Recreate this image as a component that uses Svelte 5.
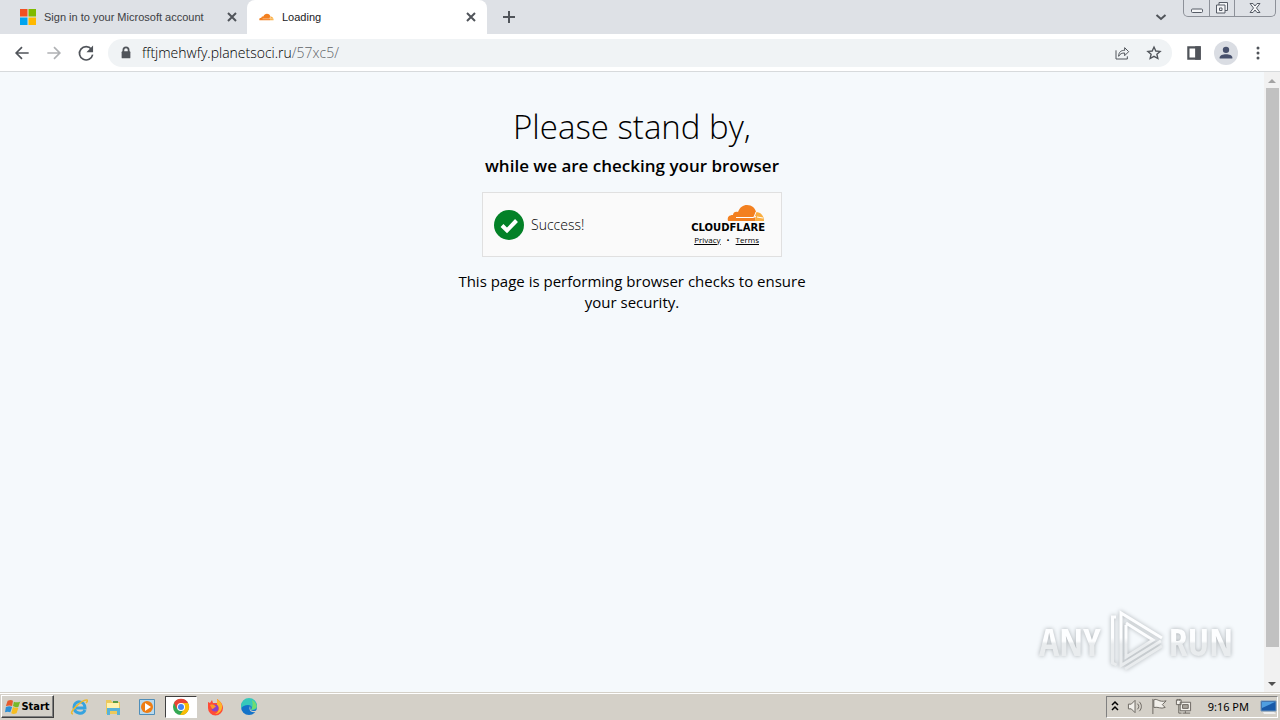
<script>
  const url = { host: 'fftjmehwfy.planetsoci.ru', path: '/57xc5/' };
</script>

{#snippet cloud()}
  <svg class="cloud" viewBox="0 0 38 18" aria-hidden="true">
    <path fill="#f38020" d="M1 17c-1-4 1-6 5-6 0-3 3-4 5-3C13 3 16 1 20 1c5 0 8 3 9 7l-1 9z" />
    <path fill="#faae40" d="M28 17l1-9c5 0 8 4 8 9z" />
    <path fill="none" stroke="#fff" d="M9 13.500h17l3-1M29 8l-2 5M30 13l6 1" />
  </svg>
{/snippet}

<div class="screen">
  <header>
    <div class="tabs">
      <div class="tab">
        <svg class="ms" viewBox="0 0 16 16" aria-hidden="true"><path fill="#f25022" d="M0 0h7.500v7.500H0z" /><path fill="#7fba00" d="M8.500 0H16v7.500H8.500z" /><path fill="#00a4ef" d="M0 8.500h7.500V16H0z" /><path fill="#ffb900" d="M8.500 8.500H16V16H8.500z" /></svg>
        <span>Sign in to your Microsoft account</span>
        <button aria-label="Close tab"><svg viewBox="0 0 16 16"><path d="M4 4l8 8M12 4l-8 8" /></svg></button>
      </div>
      <div class="tab active">
        {@render cloud()}
        <span>Loading</span>
        <button aria-label="Close tab"><svg viewBox="0 0 16 16"><path d="M4 4l8 8M12 4l-8 8" /></svg></button>
      </div>
      <button class="new" aria-label="New tab"><svg viewBox="0 0 16 16"><path d="M8 2v12M2 8h12" /></svg></button>
      <button class="search" aria-label="Search tabs"><svg viewBox="0 0 16 16"><path d="M3.500 6L8 10l4.500-4" /></svg></button>
      <div class="window">
        <button aria-label="Minimize"><svg viewBox="0 0 16 16"><rect x="2.500" y="9" width="11" height="3.500" rx="1" /></svg></button>
        <button aria-label="Restore"><svg viewBox="0 0 16 16"><path d="M5 5V2.500h8.500v8H11M2.500 5h8.500v8H2.500zM5.500 8h2.500v2.500H5.500z" /></svg></button>
        <button aria-label="Close" class="wide"><svg viewBox="0 0 16 16"><path d="M3 3.500h3l2 2.500 2-2.500h3l-3.500 4.500 3.500 4.500h-3L8 10l-2 2.500H3L6.500 8z" /></svg></button>
      </div>
    </div>
    <div class="toolbar">
      <button aria-label="Back"><svg viewBox="0 0 24 24"><path d="M20 12H5M12 5l-7 7 7 7" /></svg></button>
      <button aria-label="Forward" class="off" disabled><svg viewBox="0 0 24 24"><path d="M4 12h15M12 5l7 7-7 7" /></svg></button>
      <button aria-label="Reload"><svg viewBox="0 0 24 24"><path d="M18.500 7.500A8 8 0 1 0 20 14" /><path class="solid" d="M20.500 3v8h-8z" /></svg></button>
      <div class="address">
        <svg class="lock" viewBox="0 0 16 16" aria-hidden="true"><path d="M5 7V4.500a3 3 0 0 1 6 0V7" /><rect x="3" y="6" width="10" height="8" rx="1" /></svg>
        <a href="#top">{url.host}<i>{url.path}</i></a>
        <button aria-label="Share"><svg class="thin" viewBox="0 0 24 24"><path d="M3 8v13h17v-4M7 17c0-7 4-9 9-9V4l6 6-6 6v-4c-4 0-7 1-9 5z" /></svg></button>
        <button aria-label="Bookmark"><svg viewBox="0 0 24 24"><path d="M12 3l2.700 6 6.500.6-4.900 4.300 1.500 6.400L12 17l-5.800 3.300 1.500-6.400L2.800 9.600 9.300 9z" /></svg></button>
      </div>
      <button aria-label="Side panel"><svg class="panel" viewBox="0 0 16 16"><path d="M3 3h10v10H3z" /><path class="solid" d="M9 2h5v12H9z" /></svg></button>
      <button aria-label="Profile" class="profile"><svg viewBox="0 0 22 22"><circle cx="11" cy="7.500" r="3.500" /><path d="M4 17v-1c0-5 14-5 14 0v1z" /></svg></button>
      <button aria-label="Menu"><svg viewBox="0 0 16 16"><g class="solid"><circle cx="8" cy="3" r="1.500" /><circle cx="8" cy="8" r="1.500" /><circle cx="8" cy="13" r="1.500" /></g></svg></button>
    </div>
  </header>

  <div class="view">
    <main id="top">
      <h1>Please stand by,</h1>
      <h2>while we are checking your browser</h2>
      <section class="check">
        <svg class="tick" viewBox="0 0 30 30" aria-hidden="true"><circle cx="15" cy="15" r="15" fill="#038127" /><path fill="none" stroke="#fff" stroke-width="4" d="M8 15.500l5 5L22.500 10.500" /></svg>
        <span>Success!</span>
        <div class="brand">
          {@render cloud()}
          <b>CLOUDFLARE</b>
          <div class="links"><a href="#privacy">Privacy</a><span>•</span><a href="#terms">Terms</a></div>
        </div>
      </section>
      <p>This page is performing browser checks to ensure your security.</p>
    </main>
    <div class="scroll">
      <svg viewBox="0 0 16 16"><path fill="#a3a3a3" d="M4 11l4-4 4 4z" /></svg>
      <div class="track"><div class="thumb"></div></div>
      <svg viewBox="0 0 16 16"><path fill="#505050" d="M4 6h8l-4 4z" /></svg>
    </div>
    <div class="watermark">
      <span>ANY</span>
      <svg viewBox="0 0 60 64" aria-hidden="true">
        <defs><linearGradient id="shade" gradientUnits="userSpaceOnUse" x1="0" y1="0" x2="0" y2="64"><stop offset=".45" stop-color="#fdfeff" /><stop offset=".55" stop-color="#e9ecee" /></linearGradient></defs>
        <path d="M11 8H7.500v46l4 2" />
        <path d="M56 32L16 56.500V4L57 29" />
        <path d="M21 16v32l27-17-27-17M20 60l37-23" />
      </svg>
      <span>RUN</span>
    </div>
  </div>

  <footer>
    <button class="start">
      <svg viewBox="0 0 18 18" aria-hidden="true"><path fill="#e65a2c" d="M3 2c3-1 4-1 6 0L8 8C6 7 4 7 1 8z" /><path fill="#76b82a" d="M10 3c2 1 4 1 7 0l-2 6c-3 1-4 0-6-1z" /><path fill="#2d8fd5" d="M1 9c3-1 5-1 7 0l-2 6c-2-1-4-1-6 0z" /><path fill="#f6bd20" d="M9 9c2 1 3 1 6 1l-2 6c-3 1-4 1-6 0z" /></svg>
      Start
    </button>
    <nav>
      <button aria-label="Internet Explorer"><svg viewBox="0 0 18 18"><path fill="none" stroke="#36a3df" stroke-width="3" d="M15 12c-2 5-11 4-11-3s11-7 11 1H6" /><path fill="none" stroke="#edb92e" stroke-width="1.500" d="M3 16c-6 0 9-15 14-14 1 1 0 2-1 3" /></svg></button>
      <button aria-label="File Explorer"><svg viewBox="0 0 18 18"><path fill="#ecc95c" d="M2 2h5l1 2h8v12H2z" /><path fill="#fff2ad" d="M3 5h12v6H3z" /><path fill="#58b2d8" d="M3 10h13v7h-3v-4H6v4H3z" /><path fill="#5a9b45" d="M9 3h5v2H9z" /></svg></button>
      <button aria-label="Media Player"><svg viewBox="0 0 18 18"><path fill="#b9d9ed" stroke="#4f8eb9" d="M1.500 1.500h15v15h-15z" /><circle cx="9" cy="9" r="6" fill="#ef7d13" /><path fill="#fff" d="M7 5l6 4-6 4z" /></svg></button>
      <button aria-label="Google Chrome" class="running"><svg viewBox="0 0 18 18"><circle cx="9" cy="9" r="8" fill="#34a853" /><path fill="#ea4335" d="M2 5a8 8 0 0 1 14 0H9L5 11z" /><path fill="#fbbc05" d="M9 5h7a8 8 0 0 1-8 12l4-6z" /><circle cx="9" cy="9" r="4" fill="#fff" /><circle cx="9" cy="9" r="3" fill="#4285f4" /></svg></button>
      <button aria-label="Firefox"><svg viewBox="0 0 18 18"><path fill="#ff4b36" d="M2 4l2 1 2-3 1 3h4V1c3 2 6 5 6 9a7.500 7.500 0 0 1-15 0z" /><path fill="#ffb52a" d="M11 1c3 2 6 5 5 9-1 4-4 6-7 6 4-2 5-6 2-9z" /><circle cx="9" cy="10" r="3.500" fill="#8b42c9" /><path fill="#ff9826" d="M4 7c3-1 5 0 6 2-2 0-2 2-4 2z" /></svg></button>
      <button aria-label="Microsoft Edge"><svg viewBox="0 0 18 18"><circle cx="9" cy="9" r="8" fill="#1473c9" /><path fill="#36c8bb" d="M1 8a8 8 0 0 1 16 0c0 4-3 4-6 4 2-3 0-5-3-5-3 0-6 1-7 4z" /><path fill="#71dc70" d="M12 2c4 2 7 8 2 9l-3 1c2-3 2-6 1-10z" /><path fill="#d4d0c8" d="M10 8c1 3-1 4 3 5 2 0 3 0 4-1v2c-5 1-9-1-7-6z" /></svg></button>
    </nav>
    <div class="tray">
      <button aria-label="Show hidden icons"><svg class="small" viewBox="0 0 10 16"><path d="M2 6l3-3 3 3M2 11l3-3 3 3" fill="none" stroke="#000" stroke-width="1.500" /></svg></button>
      <svg class="gray" viewBox="0 0 18 18"><path d="M1.500 6.500h3l4-4v13l-4-4h-3z" /><path fill="none" d="M11 6c2 2 2 4 0 6M13 4c3 3 3 7 0 10" /></svg>
      <svg class="gray" viewBox="0 0 18 18"><path d="M2 1v16M3 2c4-2 5 3 13 1l-4 4 3 3c-5 2-7-1-12 0z" /></svg>
      <svg class="gray" viewBox="0 0 18 18"><path d="M5.500 4.500h11v9h-11zM8 16h8M11 14v2M1.500 2h5v5h-5zM3 1v2M5 1v2" /><path fill="#aaa69e" d="M8 7h6v4H8z" /><path fill="none" d="M4 7v9h3" /></svg>
      <time>9:16 PM</time>
      <svg class="monitor" viewBox="0 0 18 18"><path fill="#1859a8" stroke="#7194b8" d="M2 3h15v10H2z" /><path fill="#4f9ee0" d="M3 4h13L3 10z" /><path fill="#eee" d="M4 14h11l2 2H5z" /></svg>
    </div>
  </footer>
</div>

<style>
  :global(body) { margin: 0; }
  .screen { height: 100vh; display: flex; flex-direction: column; font-family: "Open Sans", "Noto Sans", sans-serif; color: #000; background: #f5f9fc; overflow: hidden; }
  button { border: 0; padding: 0; margin: 0; background: none; color: inherit; font: inherit; display: grid; place-items: center; flex: none; }
  svg { display: block; width: 16px; height: 16px; flex: none; }
  a { color: inherit; }
  header { flex: none; }
  header button svg { fill: none; stroke: #50545a; stroke-width: 2; }
  header .solid { fill: #50545a; stroke: none; }
  .tabs { display: flex; height: 34px; background: #dee1e6; }
  .tab { box-sizing: border-box; width: 240px; padding: 0 8px 0 12px; display: flex; align-items: center; gap: 8px; font-family: "Liberation Sans", Arial, sans-serif; font-size: 11px; color: #3c4043; }
  .tab:first-child { padding: 0 7px 0 20px; width: 247px; }
  .tab span { flex: 1; white-space: nowrap; }
  .tab .cloud { width: 15px; height: 8px; }
  .active { background: #fff; border-radius: 8px 8px 0 0; color: #202124; }
  .new { width: 44px; }
  .search { width: 24px; margin-left: auto; }
  .window { display: flex; height: 17px; margin: 0 4px 0 10px; border: 1px solid #8d9199; border-top: 0; border-radius: 0 0 5px 5px; box-sizing: border-box; }
  .window button { width: 25px; }
  .window button + button { border-left: 1px solid #8d9199; }
  .window .wide { width: 41px; }
  .window svg { stroke: #565c66; stroke-width: 1; fill: #f4f5f7; }
  .toolbar { height: 37px; padding: 0 10px; display: flex; align-items: center; gap: 8px; background: #fff; border-bottom: 1px solid #d7dadc; }
  .toolbar > button { width: 24px; height: 24px; }
  .toolbar > button svg { width: 20px; height: 20px; }
  .toolbar > button .panel { width: 18px; height: 18px; }
  .toolbar > button:last-child svg { width: 16px; height: 16px; }
  .toolbar .off { opacity: .45; }
  .address { flex: 1; min-width: 0; height: 28px; margin: 0 2px; padding: 0 10px; box-sizing: border-box; border-radius: 14px; background: #f0f3f5; display: flex; align-items: center; gap: 16px; }
  .address a { flex: 1; margin-left: -8px; font-size: 14px; font-weight: 300; text-decoration: none; color: #000; }
  .address i { color: #5f6368; font-style: normal; }
  .lock { height: 14px; fill: #50545a; }
  .lock path { fill: none; stroke: #50545a; stroke-width: 2; }
  header .thin { stroke-width: 1.500; }
  .toolbar .profile { border-radius: 50%; background: #dadde3; }
  header .profile svg { fill: #47506c; stroke: none; }

  .view { flex: 1; min-height: 0; display: flex; position: relative; }
  main { flex: 1; display: flex; flex-direction: column; align-items: center; padding-top: 32px; text-align: center; }
  h1 { margin: 0; font-size: 33px; line-height: 46px; font-weight: 300; }
  h2 { margin: 4px 0 14px; font-size: 17px; line-height: 24px; font-weight: 600; }
  .check { width: 300px; height: 65px; box-sizing: border-box; padding: 0 16px 0 11px; border: 1px solid #e0e0e0; background: #fafafa; display: flex; align-items: center; gap: 7px; font-size: 14px; font-weight: 300; }
  .tick { width: 30px; height: 30px; }
  .brand { margin-left: auto; display: flex; flex-direction: column; align-items: flex-end; font-size: 8px; font-weight: 400; }
  .brand .cloud { width: 38px; height: 18px; }
  .brand b { font-family: "DejaVu Sans", sans-serif; font-size: 10px; line-height: 12px; }
  .links { display: flex; gap: 6px; line-height: 12px; padding-right: 6px; }
  p { width: 360px; margin: 14px 0 0; font-size: 15px; line-height: 21px; }
  .scroll { width: 16px; display: flex; flex-direction: column; background: #f1f1f1; }
  .track { flex: 1; padding: 0 1px 0 2px; }
  .thumb { height: 95%; background: #c1c1c1; }
  .watermark { position: absolute; right: 47px; bottom: 19px; display: flex; align-items: center; gap: 4px; font-family: "Open Sans Condensed", "Liberation Sans Narrow", sans-serif; font-weight: 300; font-size: 38px; line-height: 64px; filter: drop-shadow(0 0 2px #a9aeb2); }
  .watermark span { color: transparent; background: linear-gradient(#fdfeff 50%, #e9ecee 54%); background-clip: text; }
  .watermark svg { width: 60px; height: 64px; fill: none; stroke: url(#shade); stroke-width: 3; }

  footer { flex: none; height: 28px; box-sizing: border-box; padding: 1px 2px 1px 1px; border-top: 1px solid #d4d0c8; background: #d4d0c8; box-shadow: inset 0 1px #fff; display: flex; align-items: center; }
  .start { width: 53px; height: 23px; box-sizing: border-box; display: flex; align-items: center; justify-content: center; border: 1px solid; border-color: #fff #404040 #404040 #fff; box-shadow: inset -1px -1px #808080; font-family: "DejaVu Sans Condensed", "DejaVu Sans", sans-serif; font-weight: 700; font-size: 11px; }
  nav { display: flex; gap: 2px; margin-left: 9px; }
  nav button { width: 32px; height: 22px; box-sizing: border-box; }
  nav svg { width: 18px; height: 18px; }
  .running { background: #fff; border: 1px solid; border-color: #404040 #fff #fff #404040; }
  .tray { height: 22px; box-sizing: border-box; margin-left: auto; padding: 0 0 0 3px; display: flex; align-items: center; gap: 7px; border: 1px solid; border-color: #808080 #fff #fff #808080; font-family: "Noto Sans", sans-serif; font-size: 11px; }
  .small { width: 10px; }
  .gray { width: 17px; height: 17px; fill: #f2f0eb; stroke: #68645e; stroke-width: 1; }
  time { margin: 0 3px 0 9px; }
  .monitor { width: 18px; height: 18px; }
</style>
